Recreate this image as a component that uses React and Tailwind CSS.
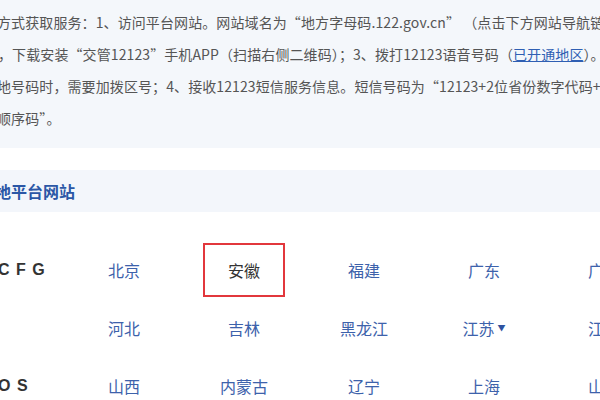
import React from "react";

const rows = [
  { letters: "C F G", items: ["北京", "安徽", "福建", "广东", "广西"] },
  { letters: "", items: ["河北", "吉林", "黑龙江", "江苏", "江西"] },
  { letters: "O S", items: ["山西", "内蒙古", "辽宁", "上海", "山东"] },
];

const Cell = ({ name }) => {
  if (name === "安徽") {
    return (
      <div className="w-[120px] h-[58px] flex items-center justify-center shrink-0">
        <div className="w-[82px] h-[54px] border-2 border-[#e2373c] flex items-center justify-center text-[#333]">
          {name}
        </div>
      </div>
    );
  }
  return (
    <div className="w-[120px] h-[58px] flex items-center justify-center shrink-0 text-[#3d62ab]">
      {name}
      {name === "江苏" && <span className="text-[8px] ml-[3px] text-[#2f52a0]">▼</span>}
    </div>
  );
};

const App = () => {
  return (
    <div
      className="w-[600px] h-[400px] overflow-hidden bg-white"
      style={{ fontFamily: '"Noto Sans CJK SC", "Noto Sans", sans-serif' }}
    >
      <div className="h-[148px] bg-[#f4f7fb] pt-[6px] text-[14px] leading-[32px] text-[#555] whitespace-nowrap tracking-[0.1px]">
        <p className="ml-[-3px]">
          方式获取服务：1、访问平台网站。网站域名为“地方字母码.122.gov.cn” （点击下方网站导航链接
        </p>
        <p className="ml-[-2px]">
          ，下载安装“交管12123”手机APP（扫描右侧二维码）；3、拨打12123语音号码（
          <a className="text-[#2f5fb3] underline">已开通地区</a>）。
        </p>
        <p className="ml-[-3px]">
          地号码时，需要加拨区号；4、接收12123短信服务信息。短信号码为“12123+2位省份数字代码+
        </p>
        <p className="ml-[-3px]">顺序码”。</p>
      </div>

      <div className="mt-[22px] h-[42px] bg-[#f3f6fb] flex items-center whitespace-nowrap">
        <h2 className="ml-[-5px] text-[16px] font-bold text-[#2b57a6]">地平台网站</h2>
      </div>

      <div className="mt-[29px] text-[16px]">
        {rows.map((row, i) => (
          <div key={i} className="flex whitespace-nowrap">
            <div
              className="w-[64px] h-[58px] flex items-center shrink-0 ml-[-2px] mr-[2px] text-[16px] font-bold text-[#333] tracking-[1px]"
              style={{ fontFamily: '"Liberation Sans", sans-serif' }}
            >
              {row.letters}
            </div>
            {row.items.map((it) => (
              <Cell key={it} name={it} />
            ))}
          </div>
        ))}
      </div>
    </div>
  );
};

export default App;
